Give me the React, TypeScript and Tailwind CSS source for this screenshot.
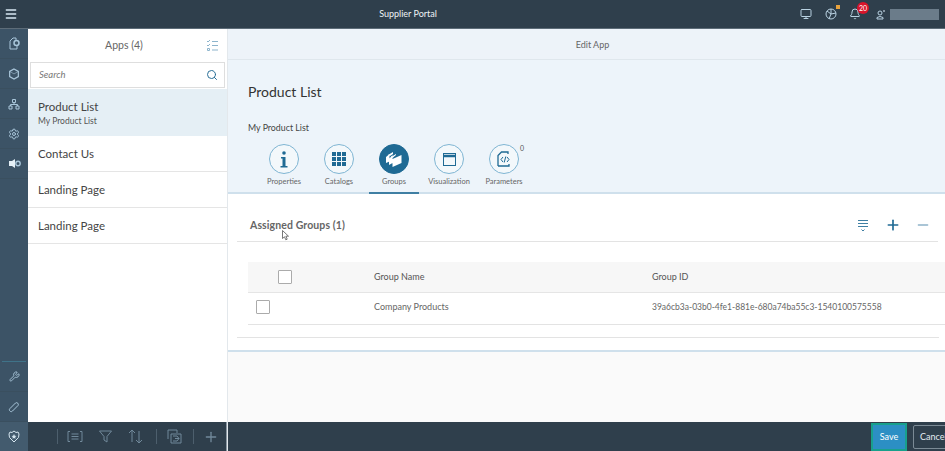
import * as React from "react";
import { Menu, Search, Monitor, Bell, Wrench, Settings, Plus, Minus } from "lucide-react";

const font = { fontFamily: '"Lato", "Open Sans", sans-serif' };

function RailItem({ children }: { children: React.ReactNode }) {
  return <div className="flex h-[30px] items-center justify-center border-b border-[#3a4f5f] text-[#a9c6da]">{children}</div>;
}

function AppRow({ title, sub, active }: { title: string; sub?: string; active?: boolean }) {
  return (
    <div className={`flex flex-col justify-center border-b border-[#e5e5e5] pl-[10px] ${active ? "h-[47px] border-b-0 bg-[#e5eff5]" : "h-[36px]"}`}>
      <div className="text-[11.5px] leading-[16px] text-[#444]">{title}</div>
      {sub && <div className="text-[8.5px] leading-[12px] text-[#555]">{sub}</div>}
    </div>
  );
}

function Tab({ label, active, children, badge }: { label: string; active?: boolean; children: React.ReactNode; badge?: string }) {
  return (
    <div className={`relative flex h-[50px] w-[50px] flex-col items-center border-b-2 ${active ? "border-[#3f7fa3]" : "border-transparent"}`}>
      <div className={`flex h-[30px] w-[30px] items-center justify-center rounded-full border ${active ? "border-[#1f6a94] bg-[#1f6a94] text-white" : "border-[#7fb5d3] bg-[#f3f8fb] text-[#1f6a94]"}`}>{children}</div>
      {badge && <span className="absolute left-[41px] top-[-1px] text-[7px] text-[#555]">{badge}</span>}
      <span className="mt-[3px] whitespace-nowrap text-[7.5px] leading-[10px] text-[#666]">{label}</span>
    </div>
  );
}

function Check() {
  return <div className="h-[14px] w-[14px] rounded-[1px] border border-[#ababab] bg-white" />;
}

export default function App() {
  return (
    <div className="flex h-[451px] w-[945px] flex-col overflow-hidden bg-white" style={font}>
      <header className="flex h-[29px] shrink-0 items-center border-b border-[#5d6c78] bg-[#2f3f4c] text-white">
        <Menu size={14} className="ml-[4px] text-[#d8e8f2]" strokeWidth={2.5} />
        <div className="flex-1 pr-[2px] text-center text-[9px] text-[#eef3f6]">Supplier Portal</div>
        <div className="flex items-center pr-[6px] text-[#b9d2e2]">
          <Monitor size={12} />
          <div className="relative ml-[13px]">
            <svg width="12" height="12" viewBox="0 0 12 12" fill="none" stroke="currentColor" strokeWidth="1"><circle cx="6" cy="6" r="5" /><path d="M2 3l4 3-2 5M6 6l5-1M6 1l0 5" /></svg>
            <span className="absolute right-[-3px] top-[-3px] h-[4px] w-[4px] bg-[#e8a33d]" />
          </div>
          <div className="relative ml-[12px]">
            <Bell size={12} />
            <span className="absolute left-[8px] top-[-6px] flex h-[12px] w-[12px] items-center justify-center rounded-full bg-[#d9152b] text-[7px] text-white">20</span>
          </div>
          <div className="ml-[15px] flex items-center gap-[4px]">
            <svg width="10" height="11" viewBox="0 0 10 11" fill="none" stroke="currentColor"><circle cx="4" cy="4" r="2" /><path d="M1 10V8.500q3-2 6 0V10z" /><path d="M7 1h2v2H7z" fill="#8696a3" stroke="none" /></svg>
            <div className="h-[11px] w-[49px] bg-[#6b7c8a]" />
          </div>
        </div>
      </header>

      <div className="flex min-h-0 flex-1">
        <aside className="flex w-[28px] shrink-0 flex-col bg-[#3c5366]">
          <RailItem>
            <svg width="13" height="13" viewBox="0 0 13 13" fill="none" stroke="currentColor"><path d="M2 12V4l3-3h3v2" /><path d="M2 12h7V9" /><circle cx="8.500" cy="6" r="2.500" strokeWidth="1.500" /></svg>
          </RailItem>
          <RailItem>
            <svg width="12" height="12" viewBox="0 0 13 13" fill="none" stroke="currentColor" strokeWidth="1.300"><path d="M6.500 1l4.700 2.700v5.600L6.500 12 1.800 9.300V3.700z" /><path d="M1.800 3.700l4.700 2.700 4.700-2.700" strokeWidth=".6" /></svg>
          </RailItem>
          <RailItem>
            <svg width="12" height="12" viewBox="0 0 12 12" fill="none" stroke="currentColor"><path d="M4.500 1.500h3v3h-3zM1 8h3v3H1zM8 8h3v3H8zM6 4.500V6M2.500 8V6.500h7V8" /></svg>
          </RailItem>
          <RailItem><Settings size={12} /></RailItem>
          <RailItem>
            <svg width="13" height="13" viewBox="0 0 13 13" fill="none"><path d="M1 4h3l3-2v9L4 9H1z" fill="#e4eff6" /><circle cx="10" cy="6.500" r="2.200" stroke="currentColor" strokeWidth="1.400" /></svg>
          </RailItem>
          <div className="flex-1" />
          <div className="mx-[2px] h-px bg-[#3f7389]" />
          <RailItem><Wrench size={11} /></RailItem>
          <RailItem>
            <svg width="12" height="12" viewBox="0 0 12 12" fill="none" stroke="currentColor"><path d="M2 10a1.500 1.500 0 0 1 0-2.500L7.500 2a1.800 1.800 0 0 1 2.500 2.500L4.500 10A1.500 1.500 0 0 1 2 10z" /></svg>
          </RailItem>
          <div className="flex h-[29px] items-center justify-center bg-[#435b6e] text-[#d5e5ef]">
            <svg width="12" height="13" viewBox="0 0 12 13" fill="none" stroke="currentColor"><path d="M2 2l2 .5L6 1l2 1.500L10 2l1 2-.5 3.500L6 12 1.500 7.500 1 4z" /><path d="M6 4l.8 1.700 1.700.2-1.300 1.200.4 1.700L6 8l-1.600.8.400-1.700L3.500 5.900l1.700-.2z" fill="currentColor" stroke="none" /></svg>
          </div>
        </aside>

        <section className="flex w-[200px] shrink-0 flex-col border-r border-[#e3e8ec]">
          <div className="flex h-[33px] shrink-0 items-center pl-[14px] pr-[8px] text-[10.5px] text-[#666]">
            <span className="flex-1 text-center">Apps (4)</span>
            <svg width="13" height="14" viewBox="0 0 13 14" fill="none" stroke="#8db4cc"><path d="M1 2l1 1 2-2M1 6l1 1 2-2M6 2.500h6M6 6.500h6M6 11h6M1.500 9.500h2v2h-2z" /></svg>
          </div>
          <div className="mx-[2px] mb-[1px] flex h-[26px] shrink-0 items-center justify-between border border-[#dedede] pl-[8px] pr-[6px]">
            <span className="text-[9.5px] italic text-[#777]">Search</span>
            <Search size={12} className="text-[#2a6f97]" />
          </div>
          <AppRow title="Product List" sub="My Product List" active />
          <AppRow title="Contact Us" />
          <AppRow title="Landing Page" />
          <AppRow title="Landing Page" />
          <div className="flex-1" />
          <div className="flex h-[29px] items-center justify-end bg-[#2f3f4c] text-[#71899a]">
            <div className="mr-[9px] h-[15px] w-px bg-[#4d5f6d]" />
            <svg className="mr-[16px]" width="16" height="11" viewBox="0 0 16 11" fill="none" stroke="currentColor"><path d="M3 .500H1v10h2M13 .500h2v10h-2M4.500 3h7M4.500 5.500h7M4.500 8h7" /></svg>
            <svg className="mr-[16px]" width="13" height="13" viewBox="0 0 13 13" fill="none" stroke="currentColor"><path d="M.500 1h12L8 6.500V12L5 10V6.500z" /></svg>
            <svg className="mr-[13px]" width="15" height="15" viewBox="0 0 15 15" fill="none" stroke="currentColor"><path d="M4 13V1M1 4l3-3 3 3M11 2v12M8 11l3 3 3-3" /></svg>
            <div className="mr-[10px] h-[15px] w-px bg-[#4d5f6d]" />
            <svg className="mr-[11px]" width="15" height="15" viewBox="0 0 15 15" fill="none" stroke="currentColor"><path d="M1 10V1h9v3M4 5h10v9H4zM6 7h4l2 2.500L10 12H6M8 9.500h4" /></svg>
            <div className="mr-[9px] h-[15px] w-px bg-[#4d5f6d]" />
            <Plus size={16} className="mr-[7px]" />
            <div className="h-[29px] w-px bg-[#8a98a3]" />
          </div>
        </section>

        <main className="flex min-w-0 flex-1 flex-col">
          <div className="flex h-[31px] shrink-0 items-center justify-center border-b border-[#dfe7ed] bg-[#edf3f9] pl-[12px] pt-[1px] text-[9px] text-[#666]">Edit App</div>
          <div className="h-[134px] shrink-0 border-b-2 border-[#cfe0ec] bg-[#edf4fa] pl-[20px]">
            <div className="pt-[22px] text-[14px] leading-[20px] text-[#333]">Product List</div>
            <div className="pt-[20px] text-[8.800px] leading-[12px] text-[#444]">My Product List</div>
            <div className="flex gap-[5px] pl-[11px] pt-[10px]">
              <Tab label="Properties">
                <svg width="8" height="17" viewBox="0 0 8 17" fill="currentColor"><circle cx="4" cy="2" r="1.800" /><path d="M1 6h4.500v9H7.500v1.500H.500V15h2V7.500H1z" /></svg>
              </Tab>
              <Tab label="Catalogs">
                <svg width="14" height="14" viewBox="0 0 14 14" fill="currentColor"><path d="M0 0h4v4H0zM5 0h4v4H5zM10 0h4v4h-4zM0 5h4v4H0zM5 5h4v4H5zM10 5h4v4h-4zM0 10h4v4H0zM5 10h4v4H5zM10 10h4v4h-4z" /></svg>
              </Tab>
              <Tab label="Groups" active>
                <svg width="18" height="15" viewBox="0 0 18 15" fill="currentColor"><path d="M1 5l3.500-3v7.500L1 11zM4 7l3.500-4v8L4 13zM7.500 7l9-4v8l-9 4z" /><path d="M3 3l5-3v2L5 4zM6 5l5-3v1L7.500 6z" /></svg>
              </Tab>
              <Tab label="Visualization">
                <svg width="15" height="15" viewBox="0 0 15 15" fill="none" stroke="currentColor"><rect x="1.500" y="1.500" width="12" height="12" /><path d="M1.500 4h12" strokeWidth="2.500" /></svg>
              </Tab>
              <Tab label="Parameters" badge="0">
                <svg width="16" height="16" viewBox="0 0 16 16" fill="none" stroke="currentColor"><path d="M2 15V4.500L5.500 1H12v2M2 15h11v-2" strokeWidth="1.300" /><path d="M7 6L5 8.500 7 11M11 6l2 2.500-2 2.500M9.800 5.500l-1.600 6" /></svg>
              </Tab>
            </div>
          </div>

          <div className="h-[158px] shrink-0 border-b-2 border-[#cfe0ec] pl-[9px]">
            <div className="relative mr-[7px] mt-[15px] flex h-[33px] items-center justify-between border-b border-[#e3e3e3] pl-[13px] pr-[7px]">
              <span className="pt-[1px] text-[10.500px] font-bold tracking-[.1px] text-[#666]">Assigned Groups (1)</span>
              <svg className="absolute left-[45px] top-[21px]" width="8" height="11" viewBox="0 0 8 11" fill="#fff" stroke="#555" strokeWidth=".8"><path d="M.500.500v8l2-1.700 1.300 3 1.400-.6-1.300-3h2.600z" /></svg>
              <div className="flex items-center">
                <svg width="12" height="14" viewBox="0 0 12 14" fill="none" stroke="#3f7fa3"><path d="M1 2.500h10M1 5.500h10M1 8.500h10M4.500 11.500L6 13l1.500-1.500" /></svg>
                <Plus size={16} strokeWidth={2.5} className="ml-[16px] text-[#1f6a94]" />
                <Minus size={16} strokeWidth={2} className="ml-[14px] text-[#8eb3c9]" />
              </div>
            </div>
            <div className="ml-[11px] mt-[20px] border-b border-[#e3e3e3]">
              <div className="grid h-[31px] grid-cols-[126px_278px_1fr] items-center border-b border-[#e5e5e5] bg-[#f7f7f7] text-[9px] text-[#555]">
                <div className="pl-[30px]"><Check /></div>
                <div>Group Name</div>
                <div>Group ID</div>
              </div>
              <div className="grid h-[31px] grid-cols-[126px_278px_1fr] items-center pb-[3px] text-[9px] text-[#666]">
                <div className="pl-[8px]"><Check /></div>
                <div>Company Products</div>
                <div className="whitespace-nowrap text-[8.500px]">39a6cb3a-03b0-4fe1-881e-680a74ba55c3-1540100575558</div>
              </div>
            </div>
            <div className="mr-[6px] mt-[12px] h-px bg-[#e3e3e3]" />
          </div>

          <div className="flex-1 bg-[#fafafa]" />

          <footer className="flex h-[29px] shrink-0 items-center justify-end gap-[6px] overflow-hidden bg-[#2f3f4c] text-[9px]">
            <button className="h-[28px] w-[36px] shrink-0 border-2 border-[#18a08c] bg-[#2c8fc4] text-white">Save</button>
            <button className="mr-[-18px] h-[24px] w-[50px] shrink-0 rounded-[2px] border border-[#7b8a95] pl-[6px] text-left text-[#e4edf2]">Cancel</button>
          </footer>
        </main>
      </div>
    </div>
  );
}
